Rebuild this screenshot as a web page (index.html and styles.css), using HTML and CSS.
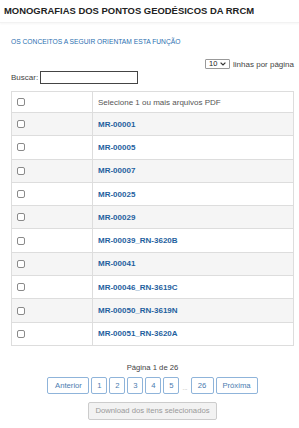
FILE: index.html
```
<!DOCTYPE html>
<html lang="pt-BR">
<head>
  <meta charset="UTF-8">
  <meta name="viewport" content="width=device-width, initial-scale=1.0">
  <title>Monografias dos Pontos Geodésicos da RRCM</title>
  <link rel="stylesheet" href="styles.css">
</head>
<body>
  <div class="page-title">
    <h1>MONOGRAFIAS DOS PONTOS GEODÉSICOS DA RRCM</h1>
  </div>

  <div class="content">
    <a class="concepts-link" href="#">OS CONCEITOS A SEGUIR ORIENTAM ESTA FUNÇÃO</a>

    <div class="page-size">
      <span class="select-wrap">
        <select id="page-size">
          <option>10</option>
          <option>25</option>
          <option>50</option>
        </select>
        <svg class="chevron" width="6" height="4" viewBox="0 0 6 4"><path d="M0.6 0.6 L3 3 L5.4 0.6" fill="none" stroke="#333" stroke-width="1.2"/></svg>
      </span>
      <span>linhas por página</span>
    </div>

    <div class="search">
      <label for="search-input">Buscar:</label>
      <input type="text" id="search-input">
    </div>

    <table class="files-table">
      <tbody id="files">
        <tr class="head-row">
          <td class="check-col"><input type="checkbox"></td>
          <td>Selecione 1 ou mais arquivos PDF</td>
        </tr>
      </tbody>
    </table>

    <div class="pager">
      <div class="pager-info">Página 1 de 26</div>
      <div class="pager-buttons">
        <button class="wide">Anterior</button>
        <button>1</button>
        <button>2</button>
        <button>3</button>
        <button>4</button>
        <button>5</button>
        <span class="dots">...</span>
        <button class="mid">26</button>
        <button class="wide">Próxima</button>
      </div>
      <button class="download" disabled>Download dos itens selecionados</button>
    </div>
  </div>

  <script>
    // Lista de monografias da primeira página
    const files = [
      "MR-00001",
      "MR-00005",
      "MR-00007",
      "MR-00025",
      "MR-00029",
      "MR-00039_RN-3620B",
      "MR-00041",
      "MR-00046_RN-3619C",
      "MR-00050_RN-3619N",
      "MR-00051_RN-3620A"
    ];

    const tbody = document.getElementById("files");

    files.forEach(name => {
      tbody.innerHTML += `<tr>
        <td class="check-col"><input type="checkbox"></td>
        <td><a href="#">${name}</a></td>
      </tr>`;
    });
  </script>
</body>
</html>
```

FILE: styles.css
```
/* Basic styling */
body {
  font-family: "Liberation Sans", Arial, sans-serif;
  margin: 0;
  padding: 0;
  background: #fff;
  color: #333;
}

.page-title {
  padding: 5px 4px 6px;
  border-bottom: 1px solid #f2f2f2;
  box-shadow: 0 1px 2px rgba(0, 0, 0, 0.04);
}

.page-title h1 {
  margin: 0;
  font-size: 9.45px;
  font-weight: bold;
  color: #222;
}

.content {
  padding: 15px 5px 0 11px;
}

.concepts-link {
  display: block;
  font-size: 6.7px;
  color: #2a6fb0;
  text-decoration: none;
}

/* Page size */
.page-size {
  display: flex;
  justify-content: flex-end;
  align-items: center;
  gap: 3px;
  margin-top: 14px;
  font-size: 8px;
  color: #444;
}

.select-wrap {
  position: relative;
  display: inline-block;
}

.select-wrap select {
  appearance: none;
  display: block;
  width: 25px;
  height: 10px;
  padding: 0 0 0 3px;
  border: 1px solid #999;
  border-radius: 1px;
  background: #fff;
  font-family: inherit;
  font-size: 7.5px;
  line-height: 8px;
  color: #222;
}

.chevron {
  position: absolute;
  right: 4px;
  top: 3px;
  pointer-events: none;
}

/* Search */
.search {
  display: flex;
  align-items: center;
  gap: 2px;
  margin-top: 2px;
  font-size: 8px;
  color: #444;
}

.search input {
  width: 96px;
  height: 11px;
  padding: 0;
  border: 1px solid #444;
  border-radius: 0;
}

/* Table */
.files-table {
  width: 100%;
  margin-top: 7px;
  border-collapse: collapse;
  font-size: 8px;
}

.files-table td {
  border: 1px solid #ddd;
  height: 22.3px;
  padding: 0 5px;
  vertical-align: middle;
}

.files-table tr.head-row td {
  height: 20px;
  color: #555;
}

.files-table tr:nth-child(even) {
  background: #f5f5f5;
}

.files-table .check-col {
  width: 75px;
  padding: 0 0 0 5px;
}

.files-table input[type="checkbox"] {
  appearance: none;
  width: 8px;
  height: 8px;
  margin: 0;
  display: block;
  background: #fff;
  border: 1px solid #8a8a8a;
  border-radius: 2px;
}

.files-table a {
  color: #1f5f9e;
  font-weight: bold;
  text-decoration: none;
}

/* Pagination */
.pager {
  display: flex;
  flex-direction: column;
  align-items: center;
  padding-top: 17px;
}

.pager-info {
  font-size: 7.7px;
  color: #444;
}

.pager-buttons {
  display: flex;
  align-items: flex-end;
  gap: 2px;
  margin-top: 5px;
}

.pager-buttons button {
  height: 17px;
  width: 16px;
  padding: 0;
  background: #fff;
  border: 1px solid #8fb4da;
  border-radius: 2px;
  color: #4b7cb0;
  font-family: inherit;
  font-size: 7.7px;
}

.pager-buttons button.wide {
  width: 42px;
}

.pager-buttons button.mid {
  width: 23px;
}

.dots {
  font-size: 6px;
  color: #999;
  padding: 0 1px 3px;
}

.download {
  margin-top: 8px;
  height: 18px;
  padding: 0 6px;
  background: #f2f2f2;
  border: 1px solid #ccc;
  border-radius: 2px;
  color: #999;
  font-family: inherit;
  font-size: 7.7px;
}
```
